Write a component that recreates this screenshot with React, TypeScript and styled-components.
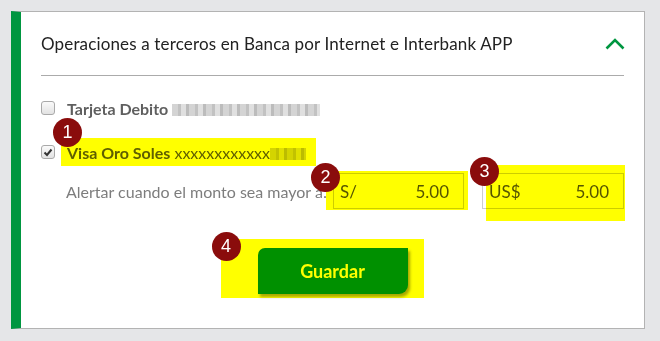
import React from "react";
import styled, { createGlobalStyle } from "styled-components";

const GlobalStyle = createGlobalStyle`
  html, body {
    margin: 0;
    padding: 0;
    background: #e5e6e8;
  }
  body {
    font-family: "Lato", "Noto Sans", sans-serif;
  }
`;

const Page = styled.div`
  width: 660px;
  height: 341px;
  box-sizing: border-box;
  padding: 11px 15px 12px 11px;
`;

const Card = styled.div`
  height: 318px;
  box-sizing: border-box;
  background: #fff;
  border: 1px solid #b3b3b3;
  border-left: 10px solid #009640;
  padding: 0 20px;
  display: flex;
  flex-direction: column;
`;

const Header = styled.div`
  height: 63px;
  display: flex;
  align-items: center;
  justify-content: space-between;
  border-bottom: 1px solid #ababab;
`;

const Title = styled.h2`
  margin: 0;
  font-size: 17px;
  font-weight: 400;
  color: #222;
  letter-spacing: 0.15px;
`;

const Chevron = styled.svg`
  width: 20px;
  height: 12px;
  margin-right: -1px;
`;

const Row = styled.label`
  position: relative;
  display: flex;
  align-items: center;
  height: 28px;
  gap: 12px;
  font-size: 16px;
  color: #606060;
`;

const Box = styled.span`
  width: 12px;
  height: 12px;
  flex: none;
  border: 1px solid #a9a9a9;
  border-radius: 3px;
  background: linear-gradient(#fafafa, #e2e2e2);
  display: flex;
  align-items: center;
  justify-content: center;
`;

const CardName = styled.span`
  font-weight: 700;
  color: #5f5f5f;
`;

const Masked = styled.span`
  color: #5f5f5f;
`;

const Blur = styled.span`
  display: inline-block;
  height: 12px;
  background: repeating-linear-gradient(
    90deg,
    #d4d4d4 0 6px,
    #c2c2c2 6px 9px,
    #e0e0e0 9px 14px,
    #bcbcbc 14px 17px
  );
  filter: blur(0.6px);
  vertical-align: middle;
  margin-left: 4px;
`;

const Highlight = styled.span<{ $t: number; $l: number; $r: number; $b: number }>`
  position: absolute;
  top: ${(p) => p.$t}px;
  left: ${(p) => p.$l}px;
  right: ${(p) => p.$r}px;
  bottom: ${(p) => p.$b}px;
  background: #ffff00;
  mix-blend-mode: multiply;
  pointer-events: none;
`;

const Badge = styled.span<{ $t: number; $l: number }>`
  position: absolute;
  top: ${(p) => p.$t}px;
  left: ${(p) => p.$l}px;
  width: 29px;
  height: 29px;
  border-radius: 50%;
  background: #8a0c0c;
  color: #fff;
  font-family: "Liberation Sans", Arial, sans-serif;
  font-size: 18px;
  display: flex;
  align-items: center;
  justify-content: center;
  z-index: 2;
`;

const AlertRow = styled.div`
  display: flex;
  align-items: center;
  margin-left: 25px;
  margin-top: 7px;
`;

const AlertLabel = styled.span`
  width: 267px;
  flex: none;
  font-size: 16px;
  color: #7d7d7d;
  white-space: nowrap;
`;

const Field = styled.div<{ $w: number; $gap?: number }>`
  position: relative;
  width: ${(p) => p.$w}px;
  flex: none;
  height: 36px;
  box-sizing: border-box;
  margin-left: ${(p) => p.$gap ?? 0}px;
  border: 1px solid #cdcdcd;
  display: flex;
  align-items: center;
  justify-content: space-between;
  padding: 0 14px 0 6px;
  font-size: 17px;
  color: #555;
`;

const ButtonRow = styled.div`
  display: flex;
  justify-content: center;
  margin-top: 39px;
`;

const ButtonWrap = styled.div`
  position: relative;
`;

const SaveButton = styled.button`
  width: 150px;
  height: 46px;
  border: none;
  background: #009000;
  color: #fff;
  font-family: "Lato", sans-serif;
  font-weight: 700;
  font-size: 18px;
  border-radius: 7px 0 9px 0;
  box-shadow: 2px 3px 3px rgba(0, 0, 0, 0.35);
`;

const Check = () => (
  <svg width="10" height="9" viewBox="0 0 10 9">
    <path d="M1.5 4.5 L4 7 L8.5 1.5" fill="none" stroke="#333" strokeWidth="2" />
  </svg>
);

export default function App() {
  return (
    <>
      <GlobalStyle />
      <Page>
        <Card>
          <Header>
            <Title>Operaciones a terceros en Banca por Internet e Interbank APP</Title>
            <Chevron viewBox="0 0 20 12">
              <path d="M1.5 10.5 L10 2 L18.5 10.5" fill="none" stroke="#009640" strokeWidth="2.6" />
            </Chevron>
          </Header>

          <Row style={{ marginTop: 18 }}>
            <Box />
            <span>
              <CardName>Tarjeta Debito</CardName>
              <Blur style={{ width: 148 }} />
            </span>
          </Row>

          <Row style={{ marginTop: 16 }}>
            <Box>
              <Check />
            </Box>
            <span>
              <CardName>Visa Oro Soles</CardName> <Masked>xxxxxxxxxxxx</Masked>
              <Blur style={{ width: 36, marginLeft: 0 }} />
            </span>
            <Highlight $t={0} $l={20} $r={308} $b={0} />
            <Badge $t={-20} $l={12}>1</Badge>
          </Row>

          <AlertRow>
            <AlertLabel>Alertar cuando el monto sea mayor a:</AlertLabel>
            <Field $w={131}>
              <span>S/</span>
              <span>5.00</span>
              <Highlight $t={-3} $l={-8} $r={-5} $b={-2} />
              <Badge $t={-11} $l={-23}>2</Badge>
            </Field>
            <Field $w={142} $gap={18}>
              <span>US$</span>
              <span>5.00</span>
              <Highlight $t={-9} $l={3} $r={-2} $b={-13} />
              <Badge $t={-17} $l={-13}>3</Badge>
            </Field>
          </AlertRow>

          <ButtonRow>
            <ButtonWrap>
              <SaveButton>Guardar</SaveButton>
              <Highlight $t={-9} $l={-37} $r={-16} $b={-4} />
              <Badge $t={-16} $l={-46}>4</Badge>
            </ButtonWrap>
          </ButtonRow>
        </Card>
      </Page>
    </>
  );
}
